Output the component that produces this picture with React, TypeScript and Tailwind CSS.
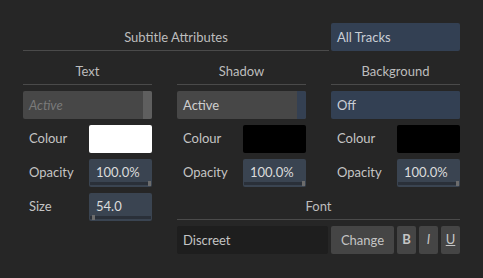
import React from 'react';

const label = 'w-[60px] pl-[6px] text-[#c4c4c4]';

function Header({ title }: { title: string }) {
  return (
    <div className="h-[26px] border-b border-[#4a4a4a] flex items-center justify-center pt-[1px] text-[#bdbdbd]">{title}</div>
  );
}

function Spin({ value, pos }: { value: string; pos: 'left' | 'right' }) {
  return (
    <div className="relative w-[63px] h-[28px] rounded-[2px] bg-[#3a4451] pl-[7px] pt-[4px] text-[#dcdcdc]">
      {value}
      <div className="absolute left-[1px] right-[1px] bottom-[2px] h-[3px] bg-[#2a3039]" />
      <div className={`absolute bottom-[1px] w-[3px] h-[5px] bg-[#6c6c6c] ${pos === 'left' ? 'left-[3px]' : 'right-[1px]'}`} />
    </div>
  );
}

function Row({ name, children }: { name: string; children: React.ReactNode }) {
  return (
    <div className="flex items-center h-[28px]">
      <div className={label}>{name}</div>
      <div className="ml-auto">{children}</div>
    </div>
  );
}

function Swatch({ color }: { color: string }) {
  return <div className={`w-[63px] h-[28px] rounded-[2px] ${color}`} />;
}

function Combo({ text, italic, thumb, bg, fg }: { text: string; italic?: boolean; thumb: string; bg: string; fg: string }) {
  return (
    <div className={`flex h-[28px] rounded-[2px] ${bg} overflow-hidden`}>
      <div className={`flex-1 flex items-center pl-[6px] pt-[1px] ${fg} ${italic ? 'italic' : ''}`}>{text}</div>
      <div className={`w-[9px] ${thumb}`} />
    </div>
  );
}

export default function App() {
  return (
    <div className="w-[483px] h-[278px] bg-[#262626] text-[13px] pl-[23px] pt-[23px]" style={{ fontFamily: 'Lato, "Noto Sans", sans-serif' }}>
      <div className="flex w-[437px] gap-[2px]">
        <div className="w-[306px] h-[28px] border-b border-[#4a4a4a] flex items-center justify-center pt-[2px] text-[#bdbdbd]">Subtitle Attributes</div>
        <div className="w-[129px] h-[28px] rounded-[2px] bg-[#334053] flex items-center pl-[6px] pt-[1px] text-[#c9ced6]">All Tracks</div>
      </div>
      <div className="flex gap-[25px] mt-[8px] w-[437px]">
        <div className="w-[129px] flex flex-col gap-[6px]">
          <Header title="Text" />
          <Combo text="Active" italic bg="bg-[#474747]" thumb="bg-[#5f5f5f]" fg="text-[#7a7a7a]" />
          <Row name="Colour"><Swatch color="bg-white" /></Row>
          <Row name="Opacity"><Spin value="100.0%" pos="right" /></Row>
          <Row name="Size"><Spin value="54.0" pos="left" /></Row>
        </div>
        <div className="w-[283px] flex flex-col">
          <div className="flex gap-[25px]">
            <div className="w-[129px] flex flex-col gap-[6px]">
              <Header title="Shadow" />
              <Combo text="Active" bg="bg-[#474747]" thumb="bg-[#344052]" fg="text-[#cfcfcf]" />
              <Row name="Colour"><Swatch color="bg-black" /></Row>
              <Row name="Opacity"><Spin value="100.0%" pos="right" /></Row>
            </div>
            <div className="w-[129px] flex flex-col gap-[6px]">
              <Header title="Background" />
              <Combo text="Off" bg="bg-[#334053]" thumb="bg-[#334053]" fg="text-[#c9ced6]" />
              <Row name="Colour"><Swatch color="bg-black" /></Row>
              <Row name="Opacity"><Spin value="100.0%" pos="right" /></Row>
            </div>
          </div>
          <div className="mt-[6px] h-[27px] border-b border-[#4a4a4a] flex items-center justify-center pt-[1px] text-[#bdbdbd]">Font</div>
          <div className="flex mt-[6px] h-[28px]">
            <div className="w-[151px] rounded-[2px] bg-[#1e1e1e] flex items-center pl-[6px] pt-[1px] text-[#c4c4c4]">Discreet</div>
            <div className="ml-[3px] w-[63px] rounded-[2px] bg-[#454545] flex items-center justify-center pt-[1px] text-[#c4c4c4]">Change</div>
            <div className="ml-[3px] w-[19px] rounded-[2px] bg-[#454545] flex items-center justify-center font-bold text-[#c4c4c4]">B</div>
            <div className="ml-[3px] w-[19px] rounded-[2px] bg-[#454545] flex items-center justify-center italic text-[#c4c4c4]">I</div>
            <div className="ml-[3px] w-[19px] rounded-[2px] bg-[#454545] flex items-center justify-center underline text-[#c4c4c4]">U</div>
          </div>
        </div>
      </div>
    </div>
  );
}
